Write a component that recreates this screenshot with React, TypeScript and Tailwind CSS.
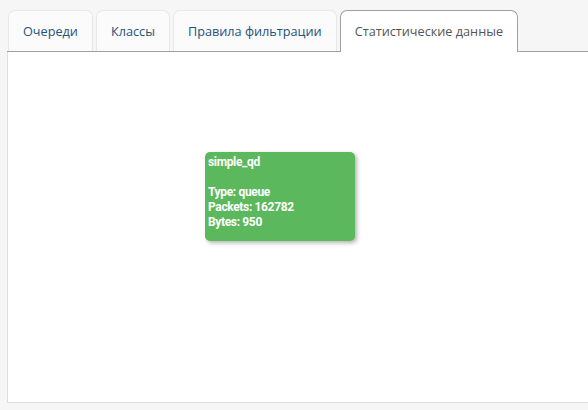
const tabs = ['Очереди', 'Классы', 'Правила фильтрации', 'Статистические данные'];

const StatsNode = () => (
  <div className="absolute left-[197px] top-[100px] w-[150px] h-[89px] rounded-[5px] bg-[#5cb85c] px-[3px] pt-[3px] text-[12px] font-bold leading-[15px] tracking-[-0.35px] text-white shadow-[2px_2px_4px_rgba(0,0,0,0.3)] [font-family:Roboto,sans-serif]">
    <div>simple_qd</div>
    <div>&nbsp;</div>
    <div>Type: queue</div>
    <div>Packets: 162782</div>
    <div>Bytes: 950</div>
  </div>
);

export default function App() {
  const active = 3;
  return (
    <div className="h-[410px] w-[588px] overflow-hidden bg-[#f6f6f6] pt-[10px] pl-[7px] [font-family:'Open_Sans',sans-serif]">
      <div className="flex gap-[3px] border-b border-[#a0a0a0] pl-[1px] w-[620px]">
        {tabs.map((t, i) => (
          <div
            key={t}
            className={
              i === active
                ? '-mb-px h-[42px] rounded-t-[7px] border border-b-0 border-[#a0a0a0] bg-white px-[14px] pt-[11px] text-[12.7px] text-[#555]'
                : 'h-[41px] rounded-t-[7px] border border-b-0 border-[#e8e8e8] bg-[#fbfbfb] px-[14px] pt-[11px] text-[12.7px] text-[#23527c]'
            }
          >
            {t}
          </div>
        ))}
      </div>
      <div className="relative h-[351px] w-[620px] border-l border-b border-[#dedede] bg-white">
        <StatsNode />
      </div>
    </div>
  );
}
